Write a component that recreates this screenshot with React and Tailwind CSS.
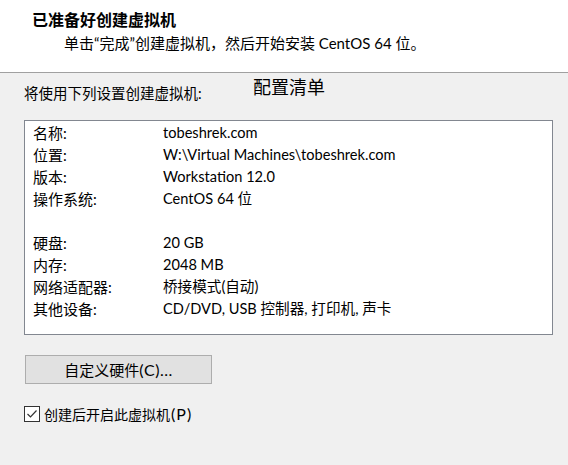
import React from "react";

const rows = [
  ["名称:", "tobeshrek.com"],
  ["位置:", "W:\\Virtual Machines\\tobeshrek.com"],
  ["版本:", "Workstation 12.0"],
  ["操作系统:", "CentOS 64 位"],
  null,
  ["硬盘:", "20 GB"],
  ["内存:", "2048 MB"],
  ["网络适配器:", "桥接模式(自动)"],
  ["其他设备:", "CD/DVD, USB 控制器, 打印机, 声卡"],
];

export default function App() {
  return (
    <div
      className="w-[568px] h-[465px] bg-[#f0f0f0] text-black flex flex-col text-[15px]"
      style={{ fontFamily: "Lato, 'Noto Sans CJK SC', sans-serif" }}
    >
      <div className="h-[73px] bg-white border-b border-[#a0a0a0] flex flex-col">
        <div className="ml-[32px] mt-[8px] h-[24px] leading-[24px] font-bold text-[16px]">
          已准备好创建虚拟机
        </div>
        <div className="ml-[64px] mt-[0px] h-[22px] leading-[22px]">
          单击“完成”创建虚拟机，然后开始安装 CentOS 64 位。
        </div>
      </div>
      <div className="pl-[24px] mt-[10px] h-[22px] flex items-center">
        <span className="w-[229px] text-[14.5px]">将使用下列设置创建虚拟机:</span>
        <span className="text-[18px] -mt-[13px]">配置清单</span>
      </div>
      <div className="ml-[24px] mt-[15px] w-[529px] h-[215px] bg-white border border-[#828790] pt-[1px] pl-[8px]">
        {rows.map((r, i) =>
          r ? (
            <div key={i} className="flex h-[22px] items-center">
              <span className="w-[130px]">{r[0]}</span>
              <span className="text-[14.6px]">{r[1]}</span>
            </div>
          ) : (
            <div key={i} className="h-[22px]" />
          )
        )}
      </div>
      <div className="ml-[25px] mt-[20px] w-[187px] h-[29px] bg-[#e1e1e1] border border-[#adadad] flex items-center justify-center">
        <span>
          自定义硬件<span className="text-[16px] tracking-[0.5px]">(C)...</span>
        </span>
      </div>
      <div className="ml-[24px] mt-[22px] flex items-center h-[16px]">
        <div className="w-[16px] h-[16px] bg-white border border-[#333] flex items-center justify-center">
          <svg width="12" height="10" viewBox="0 0 12 10">
            <path d="M1.5 5 L4.5 8 L10.5 1.5" fill="none" stroke="#333" strokeWidth="1.2" />
          </svg>
        </div>
        <span className="ml-[4px] text-[14px]">
          创建后开启此虚拟机<span className="ml-[1px] text-[16px] tracking-[1px]">(P)</span>
        </span>
      </div>
    </div>
  );
}
